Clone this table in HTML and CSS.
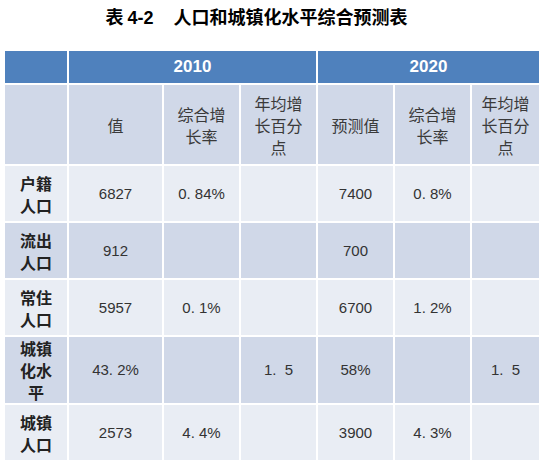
FILE: index.html
```html
<!DOCTYPE html>
<html lang="zh-CN">
<head>
    <meta charset="UTF-8">
    <meta name="viewport" content="width=device-width, initial-scale=1.0">
    <title>人口和城镇化水平综合预测表</title>
    <link rel="stylesheet" href="styles.css">
</head>
<body>
    <h1 class="title"><span class="title-no">表 <b>4-2</b></span>人口和城镇化水平综合预测表</h1>
    <table class="forecast">
        <colgroup>
            <col class="col-label">
            <col class="col-value">
            <col class="col-num">
            <col class="col-num">
            <col class="col-num">
            <col class="col-num">
            <col>
        </colgroup>
        <tr class="year-row">
            <th></th>
            <th colspan="3">2010</th>
            <th colspan="3">2020</th>
        </tr>
        <tr class="head-row dark">
            <td></td>
            <td>值</td>
            <td>综合增<br>长率</td>
            <td>年均增<br>长百分<br>点</td>
            <td>预测值</td>
            <td>综合增<br>长率</td>
            <td>年均增<br>长百分<br>点</td>
        </tr>
        <tr class="light">
            <td class="label">户籍<br>人口</td>
            <td>6827</td>
            <td class="pct">0.&nbsp;84%</td>
            <td></td>
            <td>7400</td>
            <td class="pct">0.&nbsp;8%</td>
            <td></td>
        </tr>
        <tr class="dark">
            <td class="label">流出<br>人口</td>
            <td>912</td>
            <td></td>
            <td></td>
            <td>700</td>
            <td></td>
            <td></td>
        </tr>
        <tr class="light">
            <td class="label">常住<br>人口</td>
            <td>5957</td>
            <td class="pct">0.&nbsp;1%</td>
            <td></td>
            <td>6700</td>
            <td class="pct">1.&nbsp;2%</td>
            <td></td>
        </tr>
        <tr class="dark tall">
            <td class="label">城镇<br>化水<br>平</td>
            <td class="pct">43.&nbsp;2%</td>
            <td></td>
            <td class="pct">1.&nbsp;&nbsp;5</td>
            <td>58%</td>
            <td></td>
            <td class="pct">1.&nbsp;&nbsp;5</td>
        </tr>
        <tr class="light">
            <td class="label">城镇<br>人口</td>
            <td>2573</td>
            <td class="pct">4.&nbsp;4%</td>
            <td></td>
            <td>3900</td>
            <td class="pct">4.&nbsp;3%</td>
            <td></td>
        </tr>
    </table>
</body>
</html>
```

FILE: styles.css
```css
body{
    margin:0;
    padding:0;
    background:#fff;
    font-family:"Liberation Sans", "Noto Sans CJK SC", sans-serif;
    color:#333;
}

.title{
    margin:0;
    padding:6px 26px 0 0;
    height:43px;
    box-sizing:border-box;
    text-align:center;
    font-family:"Noto Sans CJK SC", sans-serif;
    font-size:18px;
    line-height:20px;
    font-weight:bold;
    color:#000;
}

.title-no{
    margin-right:20px;
}

.title-no b{
    font-family:"Liberation Sans", sans-serif;
    font-size:18px;
}

.forecast{
    margin:6px 0 0 3px;
    width:538px;
    border-collapse:collapse;
    table-layout:fixed;
}

.col-label{ width:64px; }
.col-value{ width:95px; }
.col-num{ width:77px; }

.forecast th,
.forecast td{
    border:2px solid #fff;
    padding:0;
    text-align:center;
    vertical-align:middle;
}

.year-row th{
    height:32px;
    background:#4f81bd;
    color:#fff;
    font-size:17px;
    font-weight:bold;
}

.forecast td{
    height:55px;
    font-size:15px;
    line-height:20px;
}

.head-row td{
    height:79px;
    font-family:"Noto Sans CJK SC", sans-serif;
    font-size:16px;
    line-height:22px;
    color:#3a3a3a;
}

.forecast .tall td{
    height:66px;
}

.forecast .label{
    font-family:"Noto Sans CJK SC", sans-serif;
    font-weight:bold;
    font-size:16px;
    line-height:22px;
    color:#222;
}

.pct{
    font-size:15px;
}

.light td{ background:#e9edf4; }
.dark td{ background:#d0d8e8; }
```
